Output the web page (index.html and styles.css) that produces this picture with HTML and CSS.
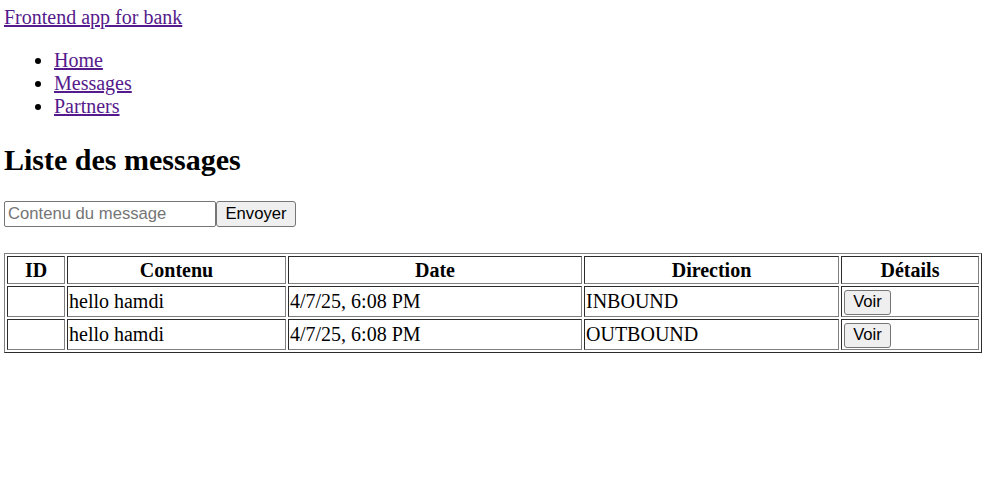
FILE: index.html
```html
<!DOCTYPE html>
<html lang="fr">
<head>
<meta charset="utf-8">
<title>Frontend app for bank</title>
<link rel="stylesheet" href="styles.css">
</head>
<body>
<header class="top">
  <a class="brand" href="#">Frontend app for bank</a>
  <ul class="nav">
    <li><a href="#">Home</a></li>
    <li><a href="#">Messages</a></li>
    <li><a href="#">Partners</a></li>
  </ul>
</header>
<main>
  <h2 class="title">Liste des messages</h2>
  <form class="send"><input class="field" type="text" placeholder="Contenu du message"><button class="btn send-btn" type="button">Envoyer</button></form>
  <table class="grid">
    <thead>
      <tr>
        <th class="c-id">ID</th>
        <th class="c-content">Contenu</th>
        <th class="c-date">Date</th>
        <th class="c-dir">Direction</th>
        <th class="c-det">Détails</th>
      </tr>
    </thead>
    <tbody>
      <tr>
        <td></td>
        <td>hello hamdi</td>
        <td>4/7/25, 6:08 PM</td>
        <td>INBOUND</td>
        <td><button class="btn voir" type="button">Voir</button></td>
      </tr>
      <tr>
        <td></td>
        <td>hello hamdi</td>
        <td>4/7/25, 6:08 PM</td>
        <td>OUTBOUND</td>
        <td><button class="btn voir" type="button">Voir</button></td>
      </tr>
    </tbody>
  </table>
</main>
</body>
</html>
```

FILE: styles.css
```css
html, body {
  background: #fff;
}
body {
  margin: 6px 1px 0 4px;
  font-family: "Liberation Serif", "Times New Roman", serif;
  font-size: 20px;
  line-height: normal;
  color: #000;
}
a {
  color: #551a8b;
  text-decoration: underline;
}
.brand {
  display: inline-block;
}
.nav {
  margin: 20px 0;
  padding-left: 50px;
  list-style: disc;
}
.title {
  font-size: 30px;
  font-weight: bold;
  margin: 25px 0 24px;
}
.send {
  display: flex;
  margin: 0 0 26px;
}
.field {
  box-sizing: border-box;
  width: 212px;
  height: 26px;
  margin: 0;
  padding: 1px 3px;
  border: 1px solid #767676;
  border-radius: 2px;
  font-family: "Liberation Sans", Arial, sans-serif;
  font-size: 16.67px;
  color: #000;
  background: #fff;
}
.field::placeholder {
  color: #757575;
}
.btn {
  box-sizing: border-box;
  margin: 0;
  border: 1px solid #767676;
  border-radius: 3px;
  background: #efefef;
  font-family: "Liberation Sans", Arial, sans-serif;
  font-size: 16.67px;
  color: #000;
  padding: 1px 8px;
}
.send-btn {
  width: 80px;
  height: 26px;
}
.voir {
  width: 47px;
  height: 25px;
  padding: 0;
  vertical-align: top;
  margin: 1px 0 0 1px;
}
.grid {
  border: 1px outset #808080;
  border-spacing: 2px;
  border-collapse: separate;
  table-layout: fixed;
  width: 978px;
}
.grid th, .grid td {
  border: 1px inset #808080;
  padding: 1px;
  text-align: left;
  vertical-align: middle;
}
.grid th {
  text-align: center;
  font-weight: bold;
  height: 24px;
}
.grid td {
  height: 27px;
}
.c-id { width: 54px; }
.c-content { width: 215px; }
.c-date { width: 290px; }
.c-dir { width: 251px; }
.c-det { width: 134px; }
```
